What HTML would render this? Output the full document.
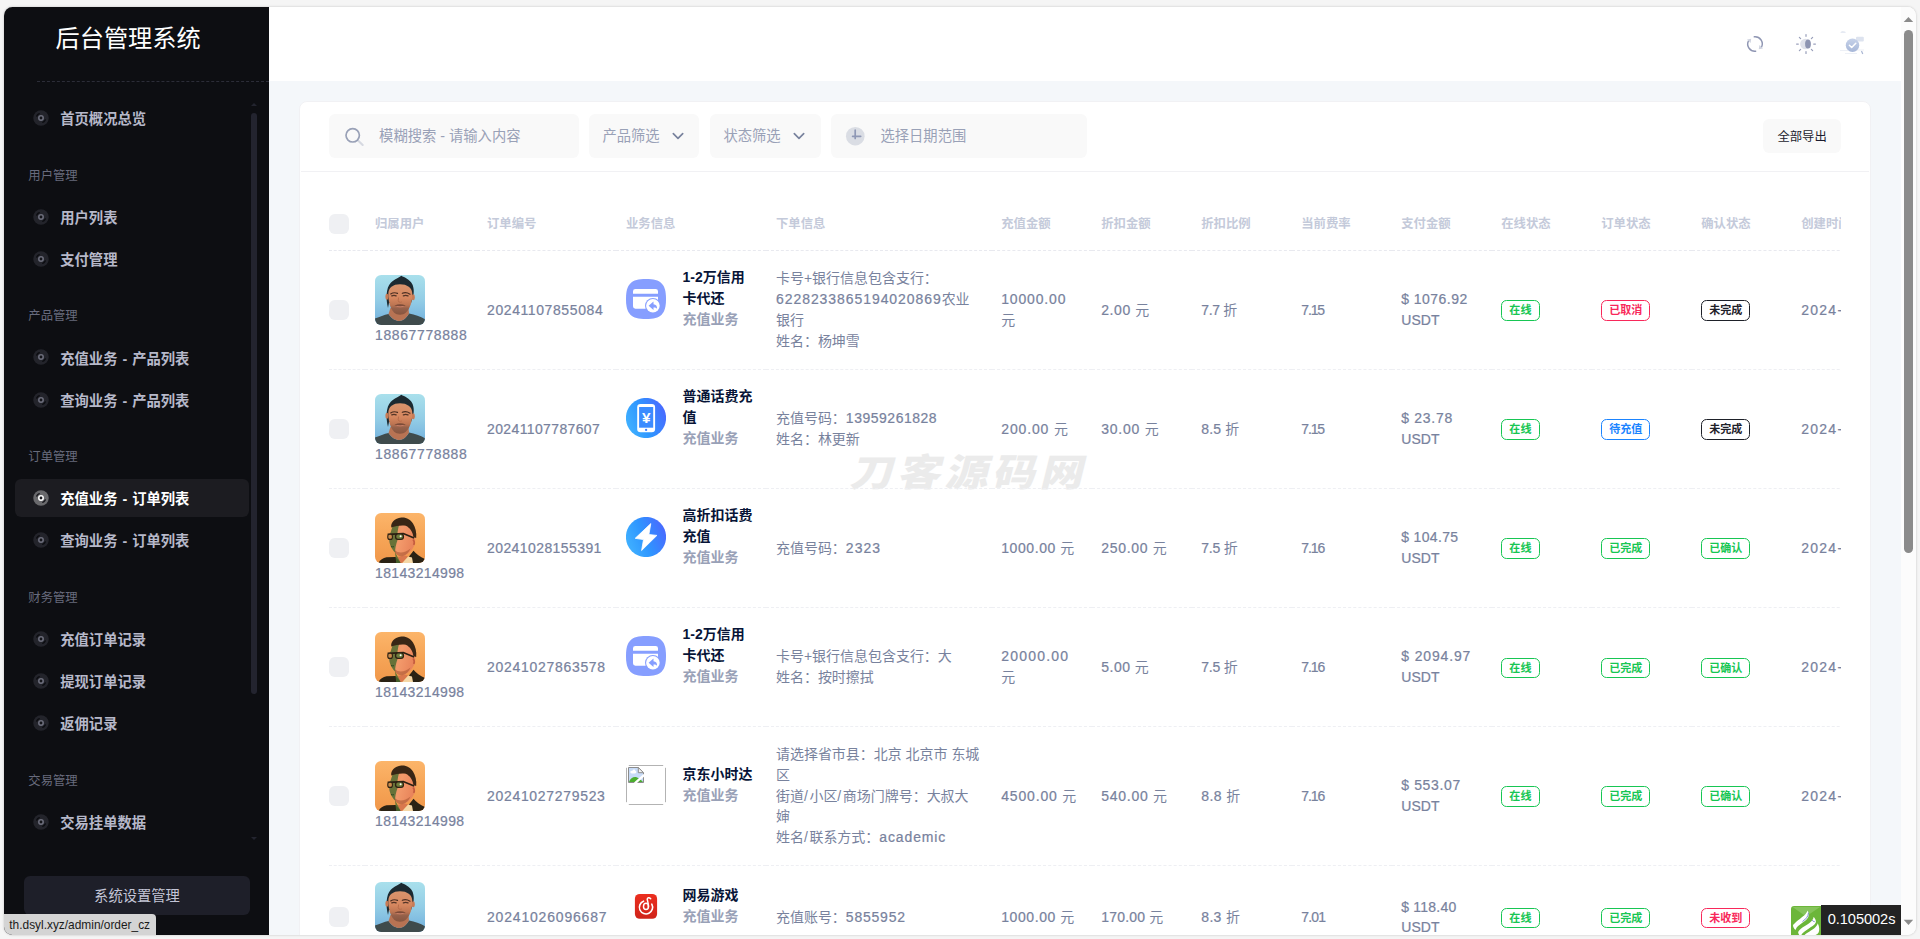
<!DOCTYPE html>
<html lang="zh-CN">
<head>
<meta charset="utf-8">
<title>后台管理系统</title>
<style>
*{box-sizing:border-box;margin:0;padding:0}
html,body{width:1920px;height:939px;overflow:hidden}
body{background:#f5f5f5;font-family:"Liberation Sans","Noto Sans CJK SC",sans-serif;font-size:13.975px;line-height:1.5;color:#78829d;position:relative}
.win{position:absolute;left:4px;top:6.6px;width:1912.2px;height:928px;border-radius:8.5px;overflow:hidden;background:#fff;box-shadow:0 0 2.5px rgba(0,0,0,.22)}
.pg{position:absolute;left:-4px;top:-6.6px;width:1920px;height:939px}
.abs{position:absolute}
/* sidebar */
.side{left:4px;top:0;width:265px;height:939px;background:#0d0e12}
.brand{left:55.5px;top:20.6px;font-size:24.2px;line-height:36px;color:#fff;white-space:nowrap;font-weight:400}
.sep{left:37px;top:81px;width:232px;height:0;border-top:1px dashed #2c2d38}
.menu{left:4px;top:97.2px;width:265px}
.mi{height:42.25px;padding:1.95px 0;margin-left:11.2px;width:233.6px}
.ml{height:38.35px;border-radius:6.2px;display:flex;align-items:center;padding-left:17.5px;font-size:14.3px;font-weight:700;color:#b6b8c9;white-space:nowrap;word-spacing:1px}
.ml svg{width:16px;height:16px;flex:none;margin-right:11.6px;color:#9a9cae}
.ml span{position:relative;top:1.9px}
.mi.on .ml{background:#1c1c21;color:#fff}
.mi.on .ml svg{color:#fff}
.mh{height:56.15px;padding:27.3px 0 0 24.3px;font-size:12.35px;line-height:18.5px;color:#686b7d;white-space:nowrap}
.sbar{left:251.2px;top:112.7px;width:6.2px;height:581.2px;border-radius:3.1px;background:#23242f}
.tri{width:0;height:0;border-left:3.2px solid transparent;border-right:3.2px solid transparent}
.sysbtn{left:24px;top:876.2px;width:226px;height:39px;border-radius:6px;background:#1e1f29;color:#c3c5d6;font-size:14.3px;line-height:40px;text-align:center}
.status{left:4px;top:914.3px;width:152px;height:21px;background:#d4d4d4;border-top-right-radius:4px;color:#1a1a1a;font-size:11.9px;line-height:22px;padding-left:5.3px;white-space:nowrap}
/* header */
.hdr{left:269px;top:0;width:1632px;height:81px;background:#fff}
.content{left:269px;top:81px;width:1632px;height:858px;background:#f4f7fa}
.vtrack{left:1901px;top:0;width:16px;height:939px;background:#fcfcfc}
.vthumb{left:1904px;top:29.7px;width:9px;height:523.6px;border-radius:4.5px;background:#8b8b8b}

/* header icons */
.hi{color:#99a1b7}
/* card */
.card{left:299.2px;top:100.7px;width:1572px;height:900px;background:#fff;border:1px solid #f1f1f4;border-radius:8px}
.chline{left:301px;top:171px;width:1568px;height:1px;background:#f1f1f4}
.inp{top:114.1px;height:43.6px;background:#f9f9f9;border-radius:6.2px;color:#99a1b7;font-size:14.3px;line-height:43.6px;white-space:nowrap}
.inp span{position:relative;top:.8px}
.btn{left:1763.2px;top:119.2px;width:77.8px;height:33.8px;border-radius:6.2px;background:#f9f9f9;color:#1b1c2e;font-size:12.35px;line-height:36.3px;text-align:center;white-space:nowrap}
.tclip{left:329px;top:190px;width:1512px;height:760px;overflow:hidden}
table{border-collapse:collapse;table-layout:fixed;width:1620px;position:absolute;left:0;top:8.6px}
th,td{padding:0 9.75px;vertical-align:middle;text-align:left;font-weight:400;white-space:nowrap}
th:first-child,td:first-child{padding-left:0}
thead th{height:52px;border-bottom:1px dashed #e8e9ef;font-size:12.35px;font-weight:700;color:#c4cada}
tbody td{border-bottom:1px dashed #eeeff3}
.ck{width:20px;height:20px;border-radius:5.8px;background:#eff0f3}
.av{display:block;width:50px;height:50px;border-radius:6.2px;overflow:hidden}
.prod{display:flex;align-items:center;margin-bottom:22.8px}
.prod .ic{width:40px;height:40px;flex:none;margin-right:16.6px}
.prod b{display:block;color:#071437;font-weight:700}
.prod i{display:block;font-style:normal;color:#99a1b7;font-weight:700}
.n{-webkit-text-stroke:.22px currentColor}
.bd{display:inline-block;height:20.5px;border:1px solid;border-radius:5.5px;font-size:11.05px;line-height:18.5px;font-weight:700;text-align:center;vertical-align:middle}
.bd.w2{width:38.3px}.bd.w3{width:49px}
.g{color:#17c653;border-color:#17c653}.r{color:#f8285a;border-color:#f8285a}.bl{color:#1b84ff;border-color:#1b84ff}.dk{color:#1e2129;border-color:#1e2129}
.wm{left:846px;top:439.4px;font-size:43px;line-height:60px;font-weight:900;font-style:normal;color:#ebebeb;letter-spacing:4.5px;white-space:nowrap;transform:skewX(-14deg) scaleY(.875);transform-origin:0 100%}
</style>
</head>
<body>
<div class="win"><div class="pg">

<!-- SIDEBAR -->
<div class="abs side"></div>
<div class="abs brand">后台管理系统</div>
<div class="abs sep"></div>
<div class="abs menu" id="menu">
<div class="mi"><div class="ml"><svg viewBox="0 0 24 24"><circle cx="12" cy="12" r="11.6" fill="currentColor" opacity=".16"/><path d="M5.6 9.2A7 7 0 0 1 9.4 5.5M18.4 14.8a7 7 0 0 1-3.8 3.7" fill="none" stroke="#0d0e12" stroke-width="2.1" stroke-linecap="round"/><circle cx="12" cy="12" r="3.3" fill="#0d0e12" stroke="currentColor" stroke-width="2.3" opacity=".62"/></svg><span>首页概况总览</span></div></div>
<div class="mh">用户管理</div>
<div class="mi"><div class="ml"><svg viewBox="0 0 24 24"><circle cx="12" cy="12" r="11.6" fill="currentColor" opacity=".16"/><path d="M5.6 9.2A7 7 0 0 1 9.4 5.5M18.4 14.8a7 7 0 0 1-3.8 3.7" fill="none" stroke="#0d0e12" stroke-width="2.1" stroke-linecap="round"/><circle cx="12" cy="12" r="3.3" fill="#0d0e12" stroke="currentColor" stroke-width="2.3" opacity=".62"/></svg><span>用户列表</span></div></div>
<div class="mi"><div class="ml"><svg viewBox="0 0 24 24"><circle cx="12" cy="12" r="11.6" fill="currentColor" opacity=".16"/><path d="M5.6 9.2A7 7 0 0 1 9.4 5.5M18.4 14.8a7 7 0 0 1-3.8 3.7" fill="none" stroke="#0d0e12" stroke-width="2.1" stroke-linecap="round"/><circle cx="12" cy="12" r="3.3" fill="#0d0e12" stroke="currentColor" stroke-width="2.3" opacity=".62"/></svg><span>支付管理</span></div></div>
<div class="mh">产品管理</div>
<div class="mi"><div class="ml"><svg viewBox="0 0 24 24"><circle cx="12" cy="12" r="11.6" fill="currentColor" opacity=".16"/><path d="M5.6 9.2A7 7 0 0 1 9.4 5.5M18.4 14.8a7 7 0 0 1-3.8 3.7" fill="none" stroke="#0d0e12" stroke-width="2.1" stroke-linecap="round"/><circle cx="12" cy="12" r="3.3" fill="#0d0e12" stroke="currentColor" stroke-width="2.3" opacity=".62"/></svg><span>充值业务 - 产品列表</span></div></div>
<div class="mi"><div class="ml"><svg viewBox="0 0 24 24"><circle cx="12" cy="12" r="11.6" fill="currentColor" opacity=".16"/><path d="M5.6 9.2A7 7 0 0 1 9.4 5.5M18.4 14.8a7 7 0 0 1-3.8 3.7" fill="none" stroke="#0d0e12" stroke-width="2.1" stroke-linecap="round"/><circle cx="12" cy="12" r="3.3" fill="#0d0e12" stroke="currentColor" stroke-width="2.3" opacity=".62"/></svg><span>查询业务 - 产品列表</span></div></div>
<div class="mh">订单管理</div>
<div class="mi on"><div class="ml"><svg viewBox="0 0 24 24"><circle cx="12" cy="12" r="11.6" fill="currentColor" opacity=".34"/><path d="M5.6 9.2A7 7 0 0 1 9.4 5.5M18.4 14.8a7 7 0 0 1-3.8 3.7" fill="none" stroke="#1c1c21" stroke-width="2.1" stroke-linecap="round"/><circle cx="12" cy="12" r="3.3" fill="#1c1c21" stroke="currentColor" stroke-width="2.3" opacity="1"/></svg><span>充值业务 - 订单列表</span></div></div>
<div class="mi"><div class="ml"><svg viewBox="0 0 24 24"><circle cx="12" cy="12" r="11.6" fill="currentColor" opacity=".16"/><path d="M5.6 9.2A7 7 0 0 1 9.4 5.5M18.4 14.8a7 7 0 0 1-3.8 3.7" fill="none" stroke="#0d0e12" stroke-width="2.1" stroke-linecap="round"/><circle cx="12" cy="12" r="3.3" fill="#0d0e12" stroke="currentColor" stroke-width="2.3" opacity=".62"/></svg><span>查询业务 - 订单列表</span></div></div>
<div class="mh">财务管理</div>
<div class="mi"><div class="ml"><svg viewBox="0 0 24 24"><circle cx="12" cy="12" r="11.6" fill="currentColor" opacity=".16"/><path d="M5.6 9.2A7 7 0 0 1 9.4 5.5M18.4 14.8a7 7 0 0 1-3.8 3.7" fill="none" stroke="#0d0e12" stroke-width="2.1" stroke-linecap="round"/><circle cx="12" cy="12" r="3.3" fill="#0d0e12" stroke="currentColor" stroke-width="2.3" opacity=".62"/></svg><span>充值订单记录</span></div></div>
<div class="mi"><div class="ml"><svg viewBox="0 0 24 24"><circle cx="12" cy="12" r="11.6" fill="currentColor" opacity=".16"/><path d="M5.6 9.2A7 7 0 0 1 9.4 5.5M18.4 14.8a7 7 0 0 1-3.8 3.7" fill="none" stroke="#0d0e12" stroke-width="2.1" stroke-linecap="round"/><circle cx="12" cy="12" r="3.3" fill="#0d0e12" stroke="currentColor" stroke-width="2.3" opacity=".62"/></svg><span>提现订单记录</span></div></div>
<div class="mi"><div class="ml"><svg viewBox="0 0 24 24"><circle cx="12" cy="12" r="11.6" fill="currentColor" opacity=".16"/><path d="M5.6 9.2A7 7 0 0 1 9.4 5.5M18.4 14.8a7 7 0 0 1-3.8 3.7" fill="none" stroke="#0d0e12" stroke-width="2.1" stroke-linecap="round"/><circle cx="12" cy="12" r="3.3" fill="#0d0e12" stroke="currentColor" stroke-width="2.3" opacity=".62"/></svg><span>返佣记录</span></div></div>
<div class="mh">交易管理</div>
<div class="mi"><div class="ml"><svg viewBox="0 0 24 24"><circle cx="12" cy="12" r="11.6" fill="currentColor" opacity=".16"/><path d="M5.6 9.2A7 7 0 0 1 9.4 5.5M18.4 14.8a7 7 0 0 1-3.8 3.7" fill="none" stroke="#0d0e12" stroke-width="2.1" stroke-linecap="round"/><circle cx="12" cy="12" r="3.3" fill="#0d0e12" stroke="currentColor" stroke-width="2.3" opacity=".62"/></svg><span>交易挂单数据</span></div></div>
</div>
<div class="abs tri" style="left:251.1px;top:103.4px;border-bottom:3.6px solid #23242f"></div>
<div class="abs sbar"></div>
<div class="abs tri" style="left:251.1px;top:836.8px;border-top:3.6px solid #23242f"></div>
<div class="abs sysbtn">系统设置管理</div>

<!-- HEADER + CONTENT -->
<div class="abs hdr"></div>
<div class="abs content"></div>
<!--HEADERICONS-->
<svg class="abs" style="left:1744.6px;top:33.7px;width:20px;height:20px" viewBox="0 0 20 20" fill="none" stroke-linecap="round"><path d="M9.3 2.8A7.2 7.2 0 0 1 16.6 13" stroke="#8f96b3" stroke-width="1.45"/><path d="M10.7 17.2A7.2 7.2 0 0 1 3.4 7" stroke="#8f96b3" stroke-width="1.45"/><path d="M2 5.5 6.2 4.8 5.6 9Z" fill="#cfd3e0"/><path d="M18 14.5 13.8 15.2 14.4 11Z" fill="#cfd3e0"/></svg>
<svg class="abs" style="left:1794.8px;top:32.9px;width:22px;height:22px" viewBox="0 0 22 22"><g stroke="#9aa0bb" stroke-width="1.25" stroke-linecap="round"><path d="M11 1.6V3.3M11 18.7V20.4M1.6 11H3.3M18.7 11H20.4M4.4 4.4 5.6 5.6M16.4 16.4 17.6 17.6M4.4 17.6 5.6 16.4M16.4 5.6 17.6 4.4"/></g><circle cx="10.3" cy="11" r="5.2" fill="#dfe1ea"/><ellipse cx="13" cy="11" rx="2.9" ry="4.5" fill="#8d94b1"/></svg>
<svg class="abs" style="left:1837px;top:28px;width:32px;height:32px" viewBox="0 0 32 32"><defs><linearGradient id="gU" x1="0" y1="0" x2="0" y2="1"><stop offset="0" stop-color="#c6d2e9"/><stop offset="1" stop-color="#a7b7d8"/></linearGradient></defs><path d="M3.5 4.5q1-2.2 3-1.2 2.3-.3 2.3 1.8H3.5Z" fill="#e6eaf3"/><rect x="19" y="8.8" width="7.8" height="4.6" rx="1" fill="#dde3ef"/><path d="M3 22.5h8M17 22h10M8 25.5h12" stroke="#edf0f6" stroke-width="1.2"/><circle cx="15.5" cy="17.3" r="6.7" fill="url(#gU)"/><path d="M12.4 17.3 14.7 19.5 18.8 15.2" fill="none" stroke="#fff" stroke-width="1.5" stroke-linecap="round" stroke-linejoin="round"/><path d="M24.5 23 25.8 26" stroke="#a9b6d3" stroke-width="1.2"/></svg>
<!--/HEADERICONS-->
<!--CARD-->
<div class="abs card"></div><div class="abs chline"></div>
<div class="abs inp" style="left:329.1px;width:249.8px;padding-left:50px"><span>模糊搜索 - 请输入内容</span></div>
<svg class="abs" style="left:342px;top:125px;width:24px;height:24px" viewBox="0 0 24 24" fill="none" stroke="#99a1b7" stroke-width="1.7"><circle cx="10.7" cy="10.3" r="6.7"/><path d="M16 15.4 20.7 20" opacity=".36" stroke-width="2.1" stroke-linecap="round"/></svg>
<div class="abs inp" style="left:589.2px;width:110.3px;padding-left:13.3px"><span>产品筛选</span></div><svg class="abs" style="left:671.1px;top:129px;width:14px;height:14px" viewBox="0 0 14 14" fill="none" stroke="#78829d" stroke-width="1.65" stroke-linecap="round" stroke-linejoin="round"><path d="M2.3 4.7 7 9.4 11.7 4.7"/></svg>
<div class="abs inp" style="left:710.1px;width:110.5px;padding-left:13.3px"><span>状态筛选</span></div><svg class="abs" style="left:792.1px;top:129px;width:14px;height:14px" viewBox="0 0 14 14" fill="none" stroke="#78829d" stroke-width="1.65" stroke-linecap="round" stroke-linejoin="round"><path d="M2.3 4.7 7 9.4 11.7 4.7"/></svg>
<div class="abs inp" style="left:831.2px;width:255.5px;padding-left:49.3px"><span>选择日期范围</span></div>
<svg class="abs" style="left:845px;top:126px;width:20px;height:20px" viewBox="0 0 20 20"><circle cx="10.3" cy="10.2" r="9.3" fill="#99a1b7" opacity=".32"/><path d="M10.2 4.2V12.5M7.6 10.3H15.7" fill="none" stroke="#8f98b5" stroke-width="1.7" stroke-linecap="round"/></svg>
<div class="abs btn">全部导出</div>
<div class="abs wm">刀客源码网</div>
<div class="abs tclip"><table><colgroup><col style="width:36.25px"><col style="width:112px"><col style="width:139px"><col style="width:150px"><col style="width:225.25px"><col style="width:100px"><col style="width:100px"><col style="width:100px"><col style="width:100px"><col style="width:100px"><col style="width:100px"><col style="width:100px"><col style="width:100px"><col style="width:157.5px"></colgroup>
<thead><tr><th><div class="ck"></div></th><th>归属用户</th><th>订单编号</th><th>业务信息</th><th>下单信息</th><th>充值金额</th><th>折扣金额</th><th>折扣比例</th><th>当前费率</th><th>支付金额</th><th>在线状态</th><th>订单状态</th><th>确认状态</th><th>创建时间</th></tr></thead><tbody>
<tr style="height:119.05px"><td><div class="ck"></div></td><td><svg class="av" viewBox="0 0 50 50"><defs><linearGradient id="skyA" x1="0" y1="0" x2="0" y2="1"><stop offset="0" stop-color="#a9e0ec"/><stop offset=".5" stop-color="#93cde6"/><stop offset=".8" stop-color="#7fbbe0"/><stop offset="1" stop-color="#6aa8d3"/></linearGradient><linearGradient id="faceA" x1="0" y1="0" x2="0" y2="1"><stop offset="0" stop-color="#d8946d"/><stop offset=".45" stop-color="#d6875f"/><stop offset=".68" stop-color="#bd7552"/><stop offset=".8" stop-color="#94604a"/><stop offset="1" stop-color="#87553f"/></linearGradient></defs><rect width="50" height="50" fill="url(#skyA)"/><path d="M13 33C10.8 24 10.8 13 15.8 7.8 19.5 4 23.5 3 26.3.700 29.5 2.5 34.5 4 37.2 9 39.5 14 38.8 19 38 22.5L36 28 14 28Z" fill="#1c2a31"/><path d="M0 50V43.6C5 41.5 9 40 13.5 39 17 44 21 46 24 46 28 46 31.5 43 34 38.5 40 39.5 45 41.5 50 44.2V50Z" fill="#3f4b4c"/><path d="M15.5 33 33.5 33 34 38.5C31.5 43 28 46 24 46 21 46 17 44 13.5 39Z" fill="#b87353"/><ellipse cx="11.9" cy="21.8" rx="1.5" ry="3" fill="#c87b56"/><ellipse cx="38.3" cy="22.3" rx="1.5" ry="3" fill="#c87b56"/><path d="M13.3 19C13.3 12.5 18 9.2 25 9.2 32 9.2 37.2 12.5 37.3 19 37.3 26 35.5 33 31 37.5 28 40.5 22 40.5 19 37.5 14.8 33 13.3 26 13.3 19Z" fill="url(#faceA)"/><path d="M15.7 18.9q3.3-2 6.8-.5M27.3 18.3q3.8-1.6 7.7.9" stroke="#4b2e22" stroke-width="1.2" fill="none" stroke-linecap="round"/><path d="M16.8 20.9q2.2-1 4.3 0M28.4 20.9q2.3-1 4.6 0" stroke="#553527" stroke-width="1.3" fill="none" stroke-linecap="round"/><path d="M23.6 22.5q-.9 3.5.300 4.5 1.5.8 3-.1" stroke="#b56b49" stroke-width=".9" fill="none"/><path d="M19.4 30.7q5.8-2.7 11.4 0-5.7 1.6-11.4 0Z" fill="#7c4b38"/><path d="M21.5 31.4q3.6.9 7.2 0" stroke="#c9806a" stroke-width=".9" fill="none"/></svg><div><span class="n" style="letter-spacing:0.63px">18867778888</span></div></td><td><span class="n" style="letter-spacing:0.61px">20241107855084</span></td><td><div class="prod"><svg class="ic" viewBox="0 0 40 40"><path d="M20 0C35 0 40 5 40 20S35 40 20 40 0 35 0 20 5 0 20 0Z" fill="#869eff"/><path d="M7 12.3A2.4 2.4 0 0 1 9.4 9.9H29.6A2.4 2.4 0 0 1 32 12.3V14.7H7ZM7 17.8H32V27.3A2.4 2.4 0 0 1 29.6 29.7H9.4A2.4 2.4 0 0 1 7 27.3Z" fill="#fff"/><circle cx="26.9" cy="26.8" r="7.9" fill="#869eff"/><circle cx="26.9" cy="26.8" r="6.8" fill="#fff"/><path d="M22.6 26.8 27.5 22.5V25.2C30 25.3 31.3 27.2 31 29.7 30.2 28.7 29.2 28.3 27.5 28.4V31.1Z" fill="#869eff"/></svg><div><b>1-2万信用<br>卡代还</b><i>充值业务</i></div></div></td><td>卡号+银行信息包含支行：<br><span class="n" style="letter-spacing:0.95px">6228233865194020869</span>农业<br>银行<br>姓名：杨坤雪</td><td><span class="n" style="letter-spacing:0.85px">10000.00</span><br>元</td><td><span class="n" style="letter-spacing:0.59px">2.00 </span>元</td><td><span class="n" style="letter-spacing:-0.34px">7.7 </span>折</td><td><span class="n" style="letter-spacing:-1.12px">7.15</span></td><td><span class="n" style="letter-spacing:0.47px">$ 1076.92</span><br><span class="n" style="letter-spacing:.1px">USDT</span></td><td><span class="bd w2 g">在线</span></td><td><span class="bd w3 r">已取消</span></td><td><span class="bd w3 dk">未完成</span></td><td><span class="n" style="letter-spacing:1.27px">2024-</span><span style="margin-left:8px">11-07 22:31:24</span></td></tr>
<tr style="height:119.05px"><td><div class="ck"></div></td><td><svg class="av" viewBox="0 0 50 50"><defs><linearGradient id="skyA" x1="0" y1="0" x2="0" y2="1"><stop offset="0" stop-color="#a9e0ec"/><stop offset=".5" stop-color="#93cde6"/><stop offset=".8" stop-color="#7fbbe0"/><stop offset="1" stop-color="#6aa8d3"/></linearGradient><linearGradient id="faceA" x1="0" y1="0" x2="0" y2="1"><stop offset="0" stop-color="#d8946d"/><stop offset=".45" stop-color="#d6875f"/><stop offset=".68" stop-color="#bd7552"/><stop offset=".8" stop-color="#94604a"/><stop offset="1" stop-color="#87553f"/></linearGradient></defs><rect width="50" height="50" fill="url(#skyA)"/><path d="M13 33C10.8 24 10.8 13 15.8 7.8 19.5 4 23.5 3 26.3.700 29.5 2.5 34.5 4 37.2 9 39.5 14 38.8 19 38 22.5L36 28 14 28Z" fill="#1c2a31"/><path d="M0 50V43.6C5 41.5 9 40 13.5 39 17 44 21 46 24 46 28 46 31.5 43 34 38.5 40 39.5 45 41.5 50 44.2V50Z" fill="#3f4b4c"/><path d="M15.5 33 33.5 33 34 38.5C31.5 43 28 46 24 46 21 46 17 44 13.5 39Z" fill="#b87353"/><ellipse cx="11.9" cy="21.8" rx="1.5" ry="3" fill="#c87b56"/><ellipse cx="38.3" cy="22.3" rx="1.5" ry="3" fill="#c87b56"/><path d="M13.3 19C13.3 12.5 18 9.2 25 9.2 32 9.2 37.2 12.5 37.3 19 37.3 26 35.5 33 31 37.5 28 40.5 22 40.5 19 37.5 14.8 33 13.3 26 13.3 19Z" fill="url(#faceA)"/><path d="M15.7 18.9q3.3-2 6.8-.5M27.3 18.3q3.8-1.6 7.7.9" stroke="#4b2e22" stroke-width="1.2" fill="none" stroke-linecap="round"/><path d="M16.8 20.9q2.2-1 4.3 0M28.4 20.9q2.3-1 4.6 0" stroke="#553527" stroke-width="1.3" fill="none" stroke-linecap="round"/><path d="M23.6 22.5q-.9 3.5.300 4.5 1.5.8 3-.1" stroke="#b56b49" stroke-width=".9" fill="none"/><path d="M19.4 30.7q5.8-2.7 11.4 0-5.7 1.6-11.4 0Z" fill="#7c4b38"/><path d="M21.5 31.4q3.6.9 7.2 0" stroke="#c9806a" stroke-width=".9" fill="none"/></svg><div><span class="n" style="letter-spacing:0.63px">18867778888</span></div></td><td><span class="n" style="letter-spacing:0.39px">20241107787607</span></td><td><div class="prod"><svg class="ic" viewBox="0 0 40 40"><defs><linearGradient id="gP1" x1="0" y1=".7" x2="1" y2=".3"><stop offset="0" stop-color="#41b2ff"/><stop offset=".45" stop-color="#2e96ff"/><stop offset="1" stop-color="#4a68ff"/></linearGradient></defs><circle cx="20" cy="20" r="20.1" fill="url(#gP1)"/><rect x="11.2" y="6.1" width="17.9" height="28.1" rx="3.3" fill="#fff"/><rect x="13.1" y="9" width="14.1" height="20.7" fill="#3b8bff"/><circle cx="20.1" cy="31.9" r="1.15" fill="#3b7dff"/><text x="20.2" y="24.6" font-family="Liberation Sans,sans-serif" font-weight="700" font-size="15.4" fill="#fff" text-anchor="middle">¥</text></svg><div><b>普通话费充<br>值</b><i>充值业务</i></div></div></td><td>充值号码：<span class="n" style="letter-spacing:0.53px">13959261828</span><br>姓名：林更新</td><td><span class="n" style="letter-spacing:0.87px">200.00 </span>元</td><td><span class="n" style="letter-spacing:0.79px">30.00 </span>元</td><td><span class="n" style="letter-spacing:0.18px">8.5 </span>折</td><td><span class="n" style="letter-spacing:-1.12px">7.15</span></td><td><span class="n" style="letter-spacing:0.73px">$ 23.78</span><br><span class="n" style="letter-spacing:.1px">USDT</span></td><td><span class="bd w2 g">在线</span></td><td><span class="bd w3 bl">待充值</span></td><td><span class="bd w3 dk">未完成</span></td><td><span class="n" style="letter-spacing:1.27px">2024-</span><span style="margin-left:8px">11-07 21:26:09</span></td></tr>
<tr style="height:119.05px"><td><div class="ck"></div></td><td><svg class="av" viewBox="0 0 50 50"><defs><linearGradient id="orB" x1="0" y1="0" x2="0" y2="1"><stop offset="0" stop-color="#fcb56a"/><stop offset=".5" stop-color="#f6a557"/><stop offset="1" stop-color="#f0974a"/></linearGradient><linearGradient id="fcB" x1="0" y1="0" x2="1" y2=".3"><stop offset="0" stop-color="#e68a5a"/><stop offset=".5" stop-color="#f39a6b"/><stop offset="1" stop-color="#e9855b"/></linearGradient></defs><rect width="50" height="50" fill="url(#orB)"/><path d="M3.5 50C5 46.5 8 45 11.6 44.2L20.6 44 26 50ZM29 50 38.5 37.8C41 41 45 44 50 46V50Z" fill="#2a2214"/><path d="M27 50 33 43.5 37 44.5 38 50Z" fill="#f5d7a6"/><path d="M17.4 14C21 10.5 31 9.5 36 14 39.5 18 41 24 40 29.5 39 35.5 35 40 30 42.5 26 44 22.5 42.5 20 39.5 15.5 35 13.5 29 14.5 23Z" fill="url(#fcB)"/><path d="M22 44 30 42.5 33 43.5 27 50 25.5 50Z" fill="#d9774d"/><path d="M17.4 14 24.5 10.5C22.5 17 22 22 22.5 27 21 32 19.5 36 20.5 40L25.7 50H21.2L20 39.5C15.5 35 13.5 29 14.5 23Z" fill="#4a6b30" opacity=".82"/><path d="M20 37.5C24 40.5 30 40 35.5 35.5 34 39.5 31 42 28 43 25 44 22 42.5 20 39.5Z" fill="#a2522f" opacity=".55"/><path d="M16.3 14.5C15.5 10 19.5 5.5 26.3 4.6 31.5 4.2 35.5 6.8 38 10.5 40.5 14.5 41.8 19.5 41.2 25L38.4 24C37.8 19 35 14.8 30.8 12.8 26 12 21 13 16.3 14.5Z" fill="#392615"/><path d="M12.6 21.4 28.2 20.6 39.1 25" stroke="#2c2013" stroke-width="1.6" fill="none" stroke-linejoin="round"/><rect x="20.6" y="20.8" width="7.8" height="5.6" rx="2.4" fill="#6e7d3c" stroke="#2c2013" stroke-width="1.3"/><rect x="12.8" y="21.2" width="4.6" height="5.2" rx="2" fill="#c98a4a" stroke="#2c2013" stroke-width="1.1"/><circle cx="25.6" cy="23.2" r="1" fill="#fff"/><path d="M38 26.5q2.2 2.3.800 5.5" stroke="#c55c3e" stroke-width="1.6" fill="none"/><path d="M16 33.5q1.7.6 3 .2" stroke="#2f4a26" stroke-width="1" fill="none"/></svg><div><span class="n" style="letter-spacing:0.36px">18143214998</span></div></td><td><span class="n" style="letter-spacing:0.43px">20241028155391</span></td><td><div class="prod"><svg class="ic" viewBox="0 0 40 40"><defs><linearGradient id="gB1" x1="0" y1=".7" x2="1" y2=".3"><stop offset="0" stop-color="#41b2ff"/><stop offset=".45" stop-color="#2e96ff"/><stop offset="1" stop-color="#4a68ff"/></linearGradient></defs><circle cx="20" cy="20" r="20.1" fill="url(#gB1)"/><path d="M24.8 6.6 22.9 17.5 30.9 18.4 15.6 33.5 17.5 22.6 9.2 21.3Z" fill="#fff" stroke="#fff" stroke-width=".8" stroke-linejoin="round"/></svg><div><b>高折扣话费<br>充值</b><i>充值业务</i></div></div></td><td>充值号码：<span class="n" style="letter-spacing:1.06px">2323</span></td><td><span class="n" style="letter-spacing:0.59px">1000.00 </span>元</td><td><span class="n" style="letter-spacing:0.71px">250.00 </span>元</td><td><span class="n" style="letter-spacing:-0.20px">7.5 </span>折</td><td><span class="n" style="letter-spacing:-1.05px">7.16</span></td><td><span class="n" style="letter-spacing:0.34px">$ 104.75</span><br><span class="n" style="letter-spacing:.1px">USDT</span></td><td><span class="bd w2 g">在线</span></td><td><span class="bd w3 g">已完成</span></td><td><span class="bd w3 g">已确认</span></td><td><span class="n" style="letter-spacing:1.27px">2024-</span><span style="margin-left:8px">10-28 15:53:11</span></td></tr>
<tr style="height:119.05px"><td><div class="ck"></div></td><td><svg class="av" viewBox="0 0 50 50"><defs><linearGradient id="orB" x1="0" y1="0" x2="0" y2="1"><stop offset="0" stop-color="#fcb56a"/><stop offset=".5" stop-color="#f6a557"/><stop offset="1" stop-color="#f0974a"/></linearGradient><linearGradient id="fcB" x1="0" y1="0" x2="1" y2=".3"><stop offset="0" stop-color="#e68a5a"/><stop offset=".5" stop-color="#f39a6b"/><stop offset="1" stop-color="#e9855b"/></linearGradient></defs><rect width="50" height="50" fill="url(#orB)"/><path d="M3.5 50C5 46.5 8 45 11.6 44.2L20.6 44 26 50ZM29 50 38.5 37.8C41 41 45 44 50 46V50Z" fill="#2a2214"/><path d="M27 50 33 43.5 37 44.5 38 50Z" fill="#f5d7a6"/><path d="M17.4 14C21 10.5 31 9.5 36 14 39.5 18 41 24 40 29.5 39 35.5 35 40 30 42.5 26 44 22.5 42.5 20 39.5 15.5 35 13.5 29 14.5 23Z" fill="url(#fcB)"/><path d="M22 44 30 42.5 33 43.5 27 50 25.5 50Z" fill="#d9774d"/><path d="M17.4 14 24.5 10.5C22.5 17 22 22 22.5 27 21 32 19.5 36 20.5 40L25.7 50H21.2L20 39.5C15.5 35 13.5 29 14.5 23Z" fill="#4a6b30" opacity=".82"/><path d="M20 37.5C24 40.5 30 40 35.5 35.5 34 39.5 31 42 28 43 25 44 22 42.5 20 39.5Z" fill="#a2522f" opacity=".55"/><path d="M16.3 14.5C15.5 10 19.5 5.5 26.3 4.6 31.5 4.2 35.5 6.8 38 10.5 40.5 14.5 41.8 19.5 41.2 25L38.4 24C37.8 19 35 14.8 30.8 12.8 26 12 21 13 16.3 14.5Z" fill="#392615"/><path d="M12.6 21.4 28.2 20.6 39.1 25" stroke="#2c2013" stroke-width="1.6" fill="none" stroke-linejoin="round"/><rect x="20.6" y="20.8" width="7.8" height="5.6" rx="2.4" fill="#6e7d3c" stroke="#2c2013" stroke-width="1.3"/><rect x="12.8" y="21.2" width="4.6" height="5.2" rx="2" fill="#c98a4a" stroke="#2c2013" stroke-width="1.1"/><circle cx="25.6" cy="23.2" r="1" fill="#fff"/><path d="M38 26.5q2.2 2.3.800 5.5" stroke="#c55c3e" stroke-width="1.6" fill="none"/><path d="M16 33.5q1.7.6 3 .2" stroke="#2f4a26" stroke-width="1" fill="none"/></svg><div><span class="n" style="letter-spacing:0.36px">18143214998</span></div></td><td><span class="n" style="letter-spacing:0.72px">20241027863578</span></td><td><div class="prod"><svg class="ic" viewBox="0 0 40 40"><path d="M20 0C35 0 40 5 40 20S35 40 20 40 0 35 0 20 5 0 20 0Z" fill="#869eff"/><path d="M7 12.3A2.4 2.4 0 0 1 9.4 9.9H29.6A2.4 2.4 0 0 1 32 12.3V14.7H7ZM7 17.8H32V27.3A2.4 2.4 0 0 1 29.6 29.7H9.4A2.4 2.4 0 0 1 7 27.3Z" fill="#fff"/><circle cx="26.9" cy="26.8" r="7.9" fill="#869eff"/><circle cx="26.9" cy="26.8" r="6.8" fill="#fff"/><path d="M22.6 26.8 27.5 22.5V25.2C30 25.3 31.3 27.2 31 29.7 30.2 28.7 29.2 28.3 27.5 28.4V31.1Z" fill="#869eff"/></svg><div><b>1-2万信用<br>卡代还</b><i>充值业务</i></div></div></td><td>卡号+银行信息包含支行：大<br>姓名：按时擦拭</td><td><span class="n" style="letter-spacing:1.21px">20000.00</span><br>元</td><td><span class="n" style="letter-spacing:0.49px">5.00 </span>元</td><td><span class="n" style="letter-spacing:-0.20px">7.5 </span>折</td><td><span class="n" style="letter-spacing:-1.05px">7.16</span></td><td><span class="n" style="letter-spacing:0.87px">$ 2094.97</span><br><span class="n" style="letter-spacing:.1px">USDT</span></td><td><span class="bd w2 g">在线</span></td><td><span class="bd w3 g">已完成</span></td><td><span class="bd w3 g">已确认</span></td><td><span class="n" style="letter-spacing:1.27px">2024-</span><span style="margin-left:8px">10-27 23:51:03</span></td></tr>
<tr style="height:138.4px"><td><div class="ck"></div></td><td><svg class="av" viewBox="0 0 50 50"><defs><linearGradient id="orB" x1="0" y1="0" x2="0" y2="1"><stop offset="0" stop-color="#fcb56a"/><stop offset=".5" stop-color="#f6a557"/><stop offset="1" stop-color="#f0974a"/></linearGradient><linearGradient id="fcB" x1="0" y1="0" x2="1" y2=".3"><stop offset="0" stop-color="#e68a5a"/><stop offset=".5" stop-color="#f39a6b"/><stop offset="1" stop-color="#e9855b"/></linearGradient></defs><rect width="50" height="50" fill="url(#orB)"/><path d="M3.5 50C5 46.5 8 45 11.6 44.2L20.6 44 26 50ZM29 50 38.5 37.8C41 41 45 44 50 46V50Z" fill="#2a2214"/><path d="M27 50 33 43.5 37 44.5 38 50Z" fill="#f5d7a6"/><path d="M17.4 14C21 10.5 31 9.5 36 14 39.5 18 41 24 40 29.5 39 35.5 35 40 30 42.5 26 44 22.5 42.5 20 39.5 15.5 35 13.5 29 14.5 23Z" fill="url(#fcB)"/><path d="M22 44 30 42.5 33 43.5 27 50 25.5 50Z" fill="#d9774d"/><path d="M17.4 14 24.5 10.5C22.5 17 22 22 22.5 27 21 32 19.5 36 20.5 40L25.7 50H21.2L20 39.5C15.5 35 13.5 29 14.5 23Z" fill="#4a6b30" opacity=".82"/><path d="M20 37.5C24 40.5 30 40 35.5 35.5 34 39.5 31 42 28 43 25 44 22 42.5 20 39.5Z" fill="#a2522f" opacity=".55"/><path d="M16.3 14.5C15.5 10 19.5 5.5 26.3 4.6 31.5 4.2 35.5 6.8 38 10.5 40.5 14.5 41.8 19.5 41.2 25L38.4 24C37.8 19 35 14.8 30.8 12.8 26 12 21 13 16.3 14.5Z" fill="#392615"/><path d="M12.6 21.4 28.2 20.6 39.1 25" stroke="#2c2013" stroke-width="1.6" fill="none" stroke-linejoin="round"/><rect x="20.6" y="20.8" width="7.8" height="5.6" rx="2.4" fill="#6e7d3c" stroke="#2c2013" stroke-width="1.3"/><rect x="12.8" y="21.2" width="4.6" height="5.2" rx="2" fill="#c98a4a" stroke="#2c2013" stroke-width="1.1"/><circle cx="25.6" cy="23.2" r="1" fill="#fff"/><path d="M38 26.5q2.2 2.3.800 5.5" stroke="#c55c3e" stroke-width="1.6" fill="none"/><path d="M16 33.5q1.7.6 3 .2" stroke="#2f4a26" stroke-width="1" fill="none"/></svg><div><span class="n" style="letter-spacing:0.36px">18143214998</span></div></td><td><span class="n" style="letter-spacing:0.70px">20241027279523</span></td><td><div class="prod"><svg class="ic" viewBox="0 0 40 40"><path d="M3.2.5H36.8M3.2 39.5H36.8M.5 3.2V36.8M39.5 3.2V36.8" stroke="#b3b3b3" stroke-width="1" stroke-linecap="round" fill="none"/><path d="M2.5 2.5H12.3L17.5 7.7V17.5H2.5Z" fill="#c8dbf7" stroke="#8c8c8c" stroke-width="1"/><ellipse cx="7.3" cy="6.9" rx="3" ry="1.5" fill="#fff"/><circle cx="8" cy="6" r="1.4" fill="#fff"/><path d="M3 17C4.5 12.8 8 11.3 11 12.4 13.5 13.3 15.5 15.2 17 17Z" fill="#4bae2e"/><path d="M12.3 2.5V7.7H17.5Z" fill="#f4f4f4" stroke="#8c8c8c" stroke-width="1" stroke-linejoin="round"/><path d="M8.8 18.3 18.3 9.9" stroke="#fff" stroke-width="2.3"/></svg><div><b>京东小时达</b><i>充值业务</i></div></div></td><td>请选择省市县：北京 北京市 东城<br>区<br>街道<span style="letter-spacing:1.6px">/</span>小区<span style="letter-spacing:1.6px">/</span>商场门牌号：大叔大<br>婶<br>姓名<span style="letter-spacing:1.6px">/</span>联系方式：<span class="n" style="letter-spacing:.9px">academic</span></td><td><span class="n" style="letter-spacing:0.84px">4500.00 </span>元</td><td><span class="n" style="letter-spacing:0.74px">540.00 </span>元</td><td><span class="n" style="letter-spacing:0.42px">8.8 </span>折</td><td><span class="n" style="letter-spacing:-1.05px">7.16</span></td><td><span class="n" style="letter-spacing:0.65px">$ 553.07</span><br><span class="n" style="letter-spacing:.1px">USDT</span></td><td><span class="bd w2 g">在线</span></td><td><span class="bd w3 g">已完成</span></td><td><span class="bd w3 g">已确认</span></td><td><span class="n" style="letter-spacing:1.27px">2024-</span><span style="margin-left:8px">10-27 07:45:52</span></td></tr>
<tr style="height:104.6px"><td><div class="ck"></div></td><td><svg class="av" viewBox="0 0 50 50"><defs><linearGradient id="skyA" x1="0" y1="0" x2="0" y2="1"><stop offset="0" stop-color="#a9e0ec"/><stop offset=".5" stop-color="#93cde6"/><stop offset=".8" stop-color="#7fbbe0"/><stop offset="1" stop-color="#6aa8d3"/></linearGradient><linearGradient id="faceA" x1="0" y1="0" x2="0" y2="1"><stop offset="0" stop-color="#d8946d"/><stop offset=".45" stop-color="#d6875f"/><stop offset=".68" stop-color="#bd7552"/><stop offset=".8" stop-color="#94604a"/><stop offset="1" stop-color="#87553f"/></linearGradient></defs><rect width="50" height="50" fill="url(#skyA)"/><path d="M13 33C10.8 24 10.8 13 15.8 7.8 19.5 4 23.5 3 26.3.700 29.5 2.5 34.5 4 37.2 9 39.5 14 38.8 19 38 22.5L36 28 14 28Z" fill="#1c2a31"/><path d="M0 50V43.6C5 41.5 9 40 13.5 39 17 44 21 46 24 46 28 46 31.5 43 34 38.5 40 39.5 45 41.5 50 44.2V50Z" fill="#3f4b4c"/><path d="M15.5 33 33.5 33 34 38.5C31.5 43 28 46 24 46 21 46 17 44 13.5 39Z" fill="#b87353"/><ellipse cx="11.9" cy="21.8" rx="1.5" ry="3" fill="#c87b56"/><ellipse cx="38.3" cy="22.3" rx="1.5" ry="3" fill="#c87b56"/><path d="M13.3 19C13.3 12.5 18 9.2 25 9.2 32 9.2 37.2 12.5 37.3 19 37.3 26 35.5 33 31 37.5 28 40.5 22 40.5 19 37.5 14.8 33 13.3 26 13.3 19Z" fill="url(#faceA)"/><path d="M15.7 18.9q3.3-2 6.8-.5M27.3 18.3q3.8-1.6 7.7.9" stroke="#4b2e22" stroke-width="1.2" fill="none" stroke-linecap="round"/><path d="M16.8 20.9q2.2-1 4.3 0M28.4 20.9q2.3-1 4.6 0" stroke="#553527" stroke-width="1.3" fill="none" stroke-linecap="round"/><path d="M23.6 22.5q-.9 3.5.300 4.5 1.5.8 3-.1" stroke="#b56b49" stroke-width=".9" fill="none"/><path d="M19.4 30.7q5.8-2.7 11.4 0-5.7 1.6-11.4 0Z" fill="#7c4b38"/><path d="M21.5 31.4q3.6.9 7.2 0" stroke="#c9806a" stroke-width=".9" fill="none"/></svg><div><span class="n" style="letter-spacing:0.63px">18867778888</span></div></td><td><span class="n" style="letter-spacing:0.83px">20241026096687</span></td><td><div class="prod"><svg class="ic" viewBox="0 0 40 40"><defs><linearGradient id="gN" x1="0" y1="0" x2="0" y2="1"><stop offset="0" stop-color="#ec2f1f"/><stop offset="1" stop-color="#cf2319"/></linearGradient></defs><rect x="8.9" y="7.9" width="22.2" height="24.9" rx="4.8" fill="url(#gN)"/><g fill="none" stroke="#fff" stroke-linecap="round"><path d="M17.5 15.2A6.6 6.6 0 1 0 25.8 18.2" stroke-width="1.6"/><ellipse cx="20" cy="20.4" rx="2.5" ry="3.1" stroke-width="1.45"/><path d="M22.4 21C22.7 18 21.6 15.5 21.2 13.2 21.3 11.5 23.3 11.2 24.7 12.7" stroke-width="1.5"/></g></svg><div><b>网易游戏</b><i>充值业务</i></div></div></td><td>充值账号：<span class="n" style="letter-spacing:0.79px">5855952</span></td><td><span class="n" style="letter-spacing:0.59px">1000.00 </span>元</td><td><span class="n" style="letter-spacing:0.21px">170.00 </span>元</td><td><span class="n" style="letter-spacing:0.36px">8.3 </span>折</td><td><span class="n" style="letter-spacing:-0.84px">7.01</span></td><td><span class="n" style="letter-spacing:0.23px">$ 118.40</span><br><span class="n" style="letter-spacing:.1px">USDT</span></td><td><span class="bd w2 g">在线</span></td><td><span class="bd w3 g">已完成</span></td><td><span class="bd w3 r">未收到</span></td><td><span class="n" style="letter-spacing:1.27px">2024-</span><span style="margin-left:8px">10-26 02:41:36</span></td></tr>
</tbody></table></div>
<!--/CARD-->

<!-- PAGE SCROLLBAR -->
<div class="abs vtrack"></div>
<svg class="abs" style="left:1902px;top:15px;width:13px;height:9px" viewBox="0 0 13 9"><path d="M1.7 7 6.45 1.9 11.2 7Z" fill="#8b8b8b"/></svg>
<div class="abs vthumb"></div>
<svg class="abs" style="left:1902px;top:917px;width:13px;height:9px" viewBox="0 0 13 9"><path d="M1.7 2.8 6.45 7.9 11.2 2.800Z" fill="#8b8b8b"/></svg>
<!--TRACE-->
<svg class="abs" style="left:1791px;top:906px;width:30.1px;height:29px" viewBox="0 0 30 28.9"><path d="M0 3.2A3.2 3.2 0 0 1 3.2 0H30V28.9H0Z" fill="#6cb63a"/><path d="M1.5 1 15 10.4 28.8 1Z" fill="#86c45c"/><path d="M2 19C6 14.5 12 11 14.5 8 15.8 6.5 16.3 5.5 16.5 4.6 18.2 7.5 18 9.5 17 11.5 15 15 10 17.5 7.4 19.7 5.8 21 5 22.5 4.5 24 3 22.5 2 21 2 19ZM8.2 28.9C7 27 7 26 7.4 25.5 10 21.5 16 19 19 16.5 21.5 14.3 22.3 12.5 22.6 10.6 24.5 13 25.3 15 24.6 16.8 23.5 19.5 20 21 17.5 22.6 14.5 24.5 11.5 26.5 10.3 28.9ZM13.5 28.9C17 25.8 23 23.5 25.3 20 26.2 18.8 26.5 18 26.7 17.2 28.5 21 28.5 24.5 27.5 26.5 26.5 28 25.5 28.6 24.5 28.9Z" fill="#fff"/><path d="M11.5 15.4C14.5 13.5 17.3 10.5 17.5 6.6M21.1 14.2Q22 15.5 23.6 15.6" fill="none" stroke="#5a6fc0" stroke-width=".8"/></svg>
<div class="abs" style="left:1821px;top:905.3px;width:79.8px;height:30px;background:#232323;color:#fff;font-size:14.6px;line-height:29.5px;padding-left:6.7px;white-space:nowrap;letter-spacing:-.05px">0.105002s</div>
<!--/TRACE-->
<div class="abs status">th.dsyl.xyz/admin/order_cz</div>
</div></div>
</body>
</html>
